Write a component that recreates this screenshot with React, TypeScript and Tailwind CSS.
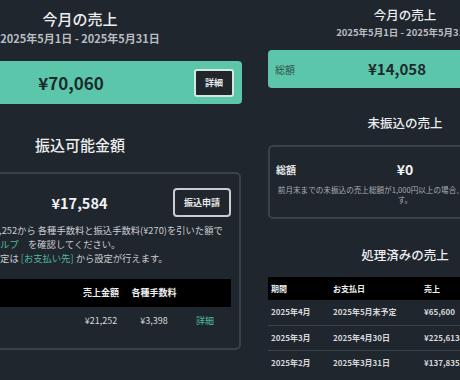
import React from "react";

type Row = { period: string; payDate: string; amount: string };

const processed: Row[] = [
  { period: "2025年4月", payDate: "2025年5月末予定", amount: "¥65,600" },
  { period: "2025年3月", payDate: "2025年4月30日", amount: "¥225,613" },
  { period: "2025年2月", payDate: "2025年3月31日", amount: "¥137,835" },
];

function LeftColumn() {
  return (
    <div className="flex flex-col w-[324px] shrink-0 ml-[-82px]">
      <div className="mt-[10px] text-center text-[15px] leading-[18px] font-medium text-[#eceef0]">
        今月の売上
      </div>
      <div className="mt-[3px] text-center text-[11px] leading-[14px] font-semibold text-[#b9bdc2]">
        2025年5月1日 - 2025年5月31日
      </div>

      <div className="mt-[16px] h-[43px] flex items-center rounded-[4px] bg-[#5bc6aa] pl-[30px] pr-[8px]">
        <div className="flex-1 text-center text-[17px] font-semibold text-[#1d2a2c]">
          ¥70,060
        </div>
        <button className="w-[40px] h-[28px] rounded-[3px] border-2 border-[#d4e6e1] bg-[#20262c] text-[9px] font-semibold text-[#e6e8ea]">
          詳細
        </button>
      </div>

      <div className="mt-[32px] text-center text-[15px] leading-[18px] font-medium text-[#eceef0]">
        振込可能金額
      </div>

      <div className="mt-[18px] mr-[1px] h-[178px] rounded-[5px] border-2 border-[#3a4149] pt-[14px] px-[8px]">
        <div className="grid grid-cols-[1fr_auto_1fr] items-center">
          <div />
          <div className="text-[14.5px] font-bold text-[#f0f2f4]">¥17,584</div>
          <button className="justify-self-end w-[58px] h-[29px] rounded-[4px] border-2 border-[#c9cdd1] bg-[#20262c] text-[9px] font-semibold text-[#e6e8ea]">
            振込申請
          </button>
        </div>

        <div className="mt-[6px] pl-[7px] text-[9.3px] leading-[14px] text-[#c9cdd2] whitespace-nowrap">
          <div>先月の売上 ¥21,252から 各種手数料と振込手数料(¥270)を引いた額で</div>
          <div>
            詳細な内訳は<span className="text-[#4fb99c]">ヘルプ</span>　を確認してください。
          </div>
          <div>
            振込先口座の設定は <span className="text-[#4fb99c]">[お支払い先]</span> から設定が行えます。
          </div>
        </div>

        <table className="mt-[14px] w-full table-fixed border-collapse text-[9px]">
          <colgroup>
            <col className="w-[149px]" />
            <col className="w-[48px]" />
            <col className="w-[58px]" />
            <col className="w-[44px]" />
            <col />
          </colgroup>
          <thead>
            <tr className="h-[28px] bg-black font-semibold text-[#eef0f2]">
              <th className="text-left pl-[8px] font-semibold">期間</th>
              <th className="font-semibold">売上金額</th>
              <th className="font-semibold">各種手数料</th>
              <th />
              <th />
            </tr>
          </thead>
          <tbody>
            <tr className="h-[28px] text-[#d6d9dc]">
              <td className="pl-[8px]">2025年5月</td>
              <td className="text-center">¥21,252</td>
              <td className="text-center">¥3,398</td>
              <td className="text-center text-[#4fb99c]">詳細</td>
              <td />
            </tr>
          </tbody>
        </table>
      </div>
    </div>
  );
}

function RightColumn() {
  return (
    <div className="flex flex-col w-[274px] shrink-0 ml-[26px]">
      <div className="mt-[7px] text-center text-[12.5px] leading-[16px] font-medium text-[#eceef0]">
        今月の売上
      </div>
      <div className="mt-[3px] text-center text-[9.5px] leading-[12px] font-semibold text-[#b9bdc2] whitespace-nowrap">
        2025年5月1日 - 2025年5月31日
      </div>

      <div className="mt-[12px] h-[38px] flex items-center rounded-[4px] bg-[#5bc6aa] pl-[7px] pr-[43px]">
        <span className="text-[10px] text-[#2f5249]">総額</span>
        <div className="flex-1 text-center text-[15px] font-semibold text-[#1d2a2c]">
          ¥14,058
        </div>
      </div>

      <div className="mt-[27px] text-center text-[12.5px] leading-[16px] font-medium text-[#eceef0]">
        未振込の売上
      </div>

      <div className="mt-[14px] h-[74px] rounded-[5px] border-2 border-[#3a4149] pt-[12px] px-[6px]">
        <div className="grid grid-cols-[1fr_auto_1fr] items-center h-[18px]">
          <span className="text-[10px] font-semibold text-[#e6e8ea]">総額</span>
          <span className="text-[14px] font-bold text-[#f0f2f4]">¥0</span>
          <div />
        </div>
        <div className="mt-[8px] text-center text-[7.6px] leading-[10px] text-[#a9aeb4] whitespace-nowrap">
          <div>前月末までの未振込の売上総額が1,000円以上の場合、翌月末に振込されま</div>
          <div>す。</div>
        </div>
      </div>

      <div className="mt-[28px] text-center text-[12.5px] leading-[16px] font-medium text-[#eceef0]">
        処理済みの売上
      </div>

      <table className="mt-[14px] w-full table-fixed border-collapse text-[8px] font-semibold">
        <colgroup>
          <col className="w-[62px]" />
          <col className="w-[91px]" />
          <col />
        </colgroup>
        <thead>
          <tr className="h-[23px] bg-black text-[#eef0f2]">
            <th className="text-left pl-[3px] font-semibold">期間</th>
            <th className="text-left pl-[3px] font-semibold">お支払日</th>
            <th className="text-left pl-[3px] font-semibold">売上</th>
          </tr>
        </thead>
        <tbody>
          {processed.map((r, i) => (
            <tr
              key={r.period}
              className={
                i < processed.length - 1
                  ? "h-[25px] border-b border-[#3a4149] text-[#d6d9dc]"
                  : "h-[25px] text-[#d6d9dc]"
              }
            >
              <td className="pl-[3px]">{r.period}</td>
              <td className="pl-[3px]">{r.payDate}</td>
              <td className="pl-[3px]">{r.amount}</td>
            </tr>
          ))}
        </tbody>
      </table>
    </div>
  );
}

export default function App() {
  return (
    <div className="w-[460px] h-[380px] overflow-hidden bg-[#20262d] flex items-start font-['Noto_Sans_CJK_JP','Noto_Sans',sans-serif]">
      <LeftColumn />
      <RightColumn />
    </div>
  );
}
